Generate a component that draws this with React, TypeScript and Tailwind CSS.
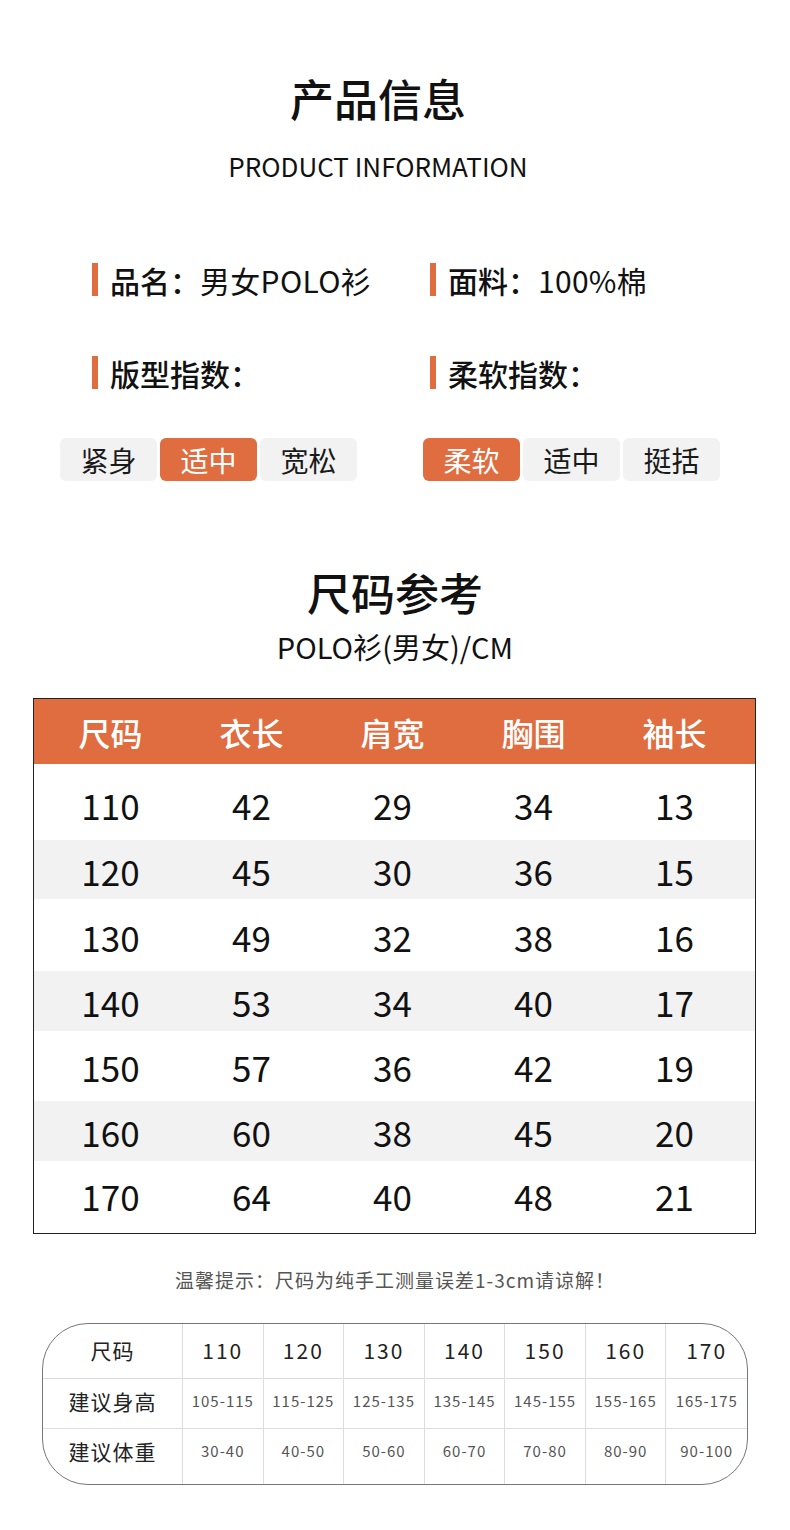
const ORANGE = 'bg-[#df6d3f]';

const attrs = [
  [
    { label: '品名：', value: '男女POLO衫' },
    { label: '面料：', value: '100%棉' },
  ],
  [
    { label: '版型指数：', value: '' },
    { label: '柔软指数：', value: '' },
  ],
];

const fitPills = [
  { text: '紧身', on: false },
  { text: '适中', on: true },
  { text: '宽松', on: false },
];

const softPills = [
  { text: '柔软', on: true },
  { text: '适中', on: false },
  { text: '挺括', on: false },
];

const sizeHead = ['尺码', '衣长', '肩宽', '胸围', '袖长'];

// row heights follow the stripes in the picture, pad nudges the numbers
const sizeRows = [
  { h: 'h-[76px]', pad: 'pt-[5px]', bg: 'bg-white', cells: ['110', '42', '29', '34', '13'] },
  { h: 'h-[59px]', pad: 'pt-[2px]', bg: 'bg-[#f2f2f2]', cells: ['120', '45', '30', '36', '15'] },
  { h: 'h-[72px]', pad: 'pt-[2px]', bg: 'bg-white', cells: ['130', '49', '32', '38', '16'] },
  { h: 'h-[60px]', pad: 'pt-[1px]', bg: 'bg-[#f2f2f2]', cells: ['140', '53', '34', '40', '17'] },
  { h: 'h-[70px]', pad: 'pt-[1px]', bg: 'bg-white', cells: ['150', '57', '36', '42', '19'] },
  { h: 'h-[60px]', pad: 'pt-[1px]', bg: 'bg-[#f2f2f2]', cells: ['160', '60', '38', '45', '20'] },
  { h: 'h-[72px]', pad: 'pb-[3px]', bg: 'bg-white', cells: ['170', '64', '40', '48', '21'] },
];

const sizes = ['110', '120', '130', '140', '150', '160', '170'];
const heights = ['105-115', '115-125', '125-135', '135-145', '145-155', '155-165', '165-175'];
const weights = ['30-40', '40-50', '50-60', '60-70', '70-80', '80-90', '90-100'];

function Pill({ text, on }: { text: string; on: boolean }) {
  return (
    <div
      className={`flex h-[43px] w-[97px] items-center justify-center rounded-[6px] text-[28px] leading-none ${
        on ? 'bg-[#df6d3f] text-white' : 'bg-[#f2f2f2] text-[#1a1a1a]'
      }`}
    >
      {text}
    </div>
  );
}

function AttrItem({ label, value }: { label: string; value: string }) {
  return (
    <div className="flex h-[33px] items-center">
      <div className={`h-[33px] w-[6px] ${ORANGE}`} />
      <div className="ml-[12px] flex items-center text-[30px] leading-none text-[#111]">
        <span className="font-medium">{label}</span>
        <span className="tracking-[0.3px]">{value}</span>
      </div>
    </div>
  );
}

export default function App() {
  return (
    <div
      className="relative h-[1530px] w-[790px] overflow-hidden bg-white text-[#111]"
      style={{ fontFamily: '"Noto Sans CJK SC", "Noto Sans", sans-serif' }}
    >
      {/* header */}
      <div className="pr-[34px] pt-[76px] text-center">
        <h1 className="text-[44px] font-medium leading-[44px]">产品信息</h1>
        <p className="mt-[33px] text-[26px] leading-[26px]">PRODUCT INFORMATION</p>
      </div>

      {/* attributes */}
      <div className="mt-[84px] flex flex-col gap-[60px] pl-[92px]">
        {attrs.map((row, i) => (
          <div key={i} className="flex">
            <div className="w-[338px]">
              <AttrItem {...row[0]} />
            </div>
            <AttrItem {...row[1]} />
          </div>
        ))}
      </div>

      {/* index pills */}
      <div className="mt-[49px] flex pl-[60px]">
        <div className="flex w-[363px] gap-[3px]">
          {fitPills.map((p, i) => (
            <Pill key={i} {...p} />
          ))}
        </div>
        <div className="flex gap-[3px]">
          {softPills.map((p, i) => (
            <Pill key={i} {...p} />
          ))}
        </div>
      </div>

      {/* size reference */}
      <div className="mt-[89px] text-center">
        <h2 className="text-[44px] font-medium leading-[44px]">尺码参考</h2>
        <p className="mt-[18px] text-[29px] leading-[29px]">POLO衫(男女)/CM</p>
      </div>

      <div className="ml-[33px] mt-[37px] w-[723px] border border-[#222]">
        <div className={`grid h-[65px] grid-cols-5 items-center pl-[6px] pr-[10px] ${ORANGE}`}>
          {sizeHead.map((h) => (
            <div key={h} className="text-center text-[32px] font-medium leading-none text-white">
              {h}
            </div>
          ))}
        </div>
        {sizeRows.map((r, i) => (
          <div key={i} className={`grid grid-cols-5 items-center pl-[6px] pr-[10px] ${r.h} ${r.bg}`}>
            {r.cells.map((c, j) => (
              <div key={j} className={`text-center text-[35px] leading-none ${r.pad}`}>
                {c}
              </div>
            ))}
          </div>
        ))}
      </div>

      <p className="mt-[36px] text-center text-[19px] leading-[19px] tracking-[1px] text-[#555]">
        温馨提示：尺码为纯手工测量误差1-3cm请谅解！
      </p>

      {/* height / weight chart */}
      <div className="ml-[42px] mt-[34px] h-[162px] w-[706px] overflow-hidden rounded-[46px] border-[1.5px] border-[#777]">
        <div className="grid h-full grid-cols-[140px_repeat(7,1fr)] grid-rows-[55px_50px_1fr]">
          <div className="flex items-center justify-center border-b border-r border-[#ddd] text-[21px] tracking-[1px] text-[#222]">
            尺码
          </div>
          {sizes.map((s, i) => (
            <div
              key={s}
              className={`flex items-center justify-center border-b border-[#ddd] text-[21px] tracking-[2px] text-[#222] ${
                i < 6 ? 'border-r' : ''
              }`}
            >
              {s}
            </div>
          ))}
          <div className="flex items-center justify-center border-b border-r border-[#ddd] pb-[3px] text-[21px] tracking-[1px] text-[#222]">
            建议身高
          </div>
          {heights.map((s, i) => (
            <div
              key={s}
              className={`flex items-center justify-center border-b border-[#ddd] pb-[4px] text-[15px] tracking-[1px] text-[#555] ${
                i < 6 ? 'border-r' : ''
              }`}
            >
              {s}
            </div>
          ))}
          <div className="flex items-center justify-center border-r border-[#ddd] pb-[10px] text-[21px] tracking-[1px] text-[#222]">
            建议体重
          </div>
          {weights.map((s, i) => (
            <div
              key={s}
              className={`flex items-center justify-center border-[#ddd] pb-[11px] text-[15px] tracking-[1px] text-[#555] ${
                i < 6 ? 'border-r' : ''
              }`}
            >
              {s}
            </div>
          ))}
        </div>
      </div>
    </div>
  );
}
